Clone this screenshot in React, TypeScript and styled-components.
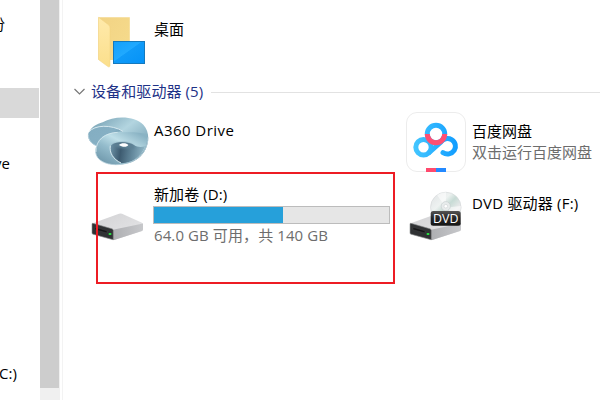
import React from "react";
import styled, { createGlobalStyle } from "styled-components";

const Global = createGlobalStyle`
  * { box-sizing: border-box; }
  body { margin: 0; background: #fff; overflow: hidden; }
`;

const Window = styled.div`
  position: relative;
  display: flex;
  width: 600px;
  height: 400px;
  overflow: hidden;
  background: #fff;
  color: #000;
  font-family: "Open Sans", "Noto Sans CJK SC", sans-serif;
  font-size: 15px;
`;

const Sidebar = styled.nav`
  width: 40px;
  height: 400px;
  overflow: hidden;
  padding-top: 9px;
  flex: none;
`;

const NavRow = styled.div<{ $selected?: boolean; $shift?: number; $gap?: number }>`
  width: 39px;
  height: 30px;
  line-height: 30px;
  margin-bottom: ${(p) => p.$gap ?? 0}px;
  text-indent: ${(p) => p.$shift ?? 0}px;
  white-space: nowrap;
  background: ${(p) => (p.$selected ? "#d9d9d9" : "transparent")};
`;

const ScrollTrack = styled.div`
  width: 20px;
  height: 400px;
  flex: none;
  background: #f0f0f0;
`;

const ScrollThumb = styled.div`
  width: 19px;
  height: 388px;
  background: #cdcdcd;
`;

const Main = styled.main`
  flex: 1;
  min-width: 0;
  margin-left: 2px;
  border-left: 1px solid #f3f3f3;
  padding-left: 11px;
`;

const FolderRow = styled.div`
  display: flex;
  height: 80px;
  padding: 14px 0 0 22px;
`;

const GroupHeader = styled.div`
  display: flex;
  align-items: center;
  height: 22px;
  color: #1e3287;
`;

const Rule = styled.div`
  flex: 1;
  height: 1px;
  margin: 2px 0 0 8px;
  background: #e2e2e2;
`;

const Grid = styled.div`
  display: grid;
  grid-template-columns: 318px 210px;
  grid-template-rows: 74px 80px;
  padding: 9px 0 0 12px;
`;

const Tile = styled.div`
  display: flex;
  min-width: 0;
`;

const IconSlot = styled.div`
  width: 68px;
  flex: none;
  svg { display: block; }
`;

const Details = styled.div<{ $top: number }>`
  margin-top: ${(p) => p.$top}px;
  line-height: 22px;
`;

const Label = styled.div<{ $muted?: boolean; $track?: number; $height?: number }>`
  height: ${(p) => p.$height ?? 22}px;
  line-height: ${(p) => p.$height ?? 22}px;
  white-space: nowrap;
  letter-spacing: ${(p) => p.$track ?? 0}px;
  color: ${(p) => (p.$muted ? "#6d6d6d" : "inherit")};
`;

const Capacity = styled.div`
  width: 237px;
  height: 18px;
  margin: 1px 0 0 -1px;
  border: 1px solid #bcbcbc;
  background: #e6e6e6;
`;

const Used = styled.div`
  width: 129px;
  height: 16px;
  background: #26a0da;
`;

const Highlight = styled.div`
  position: absolute;
  left: 96px;
  top: 172px;
  width: 299px;
  height: 112px;
  border: 2px solid #ed1c24;
  pointer-events: none;
`;

const FolderIcon = () => (
  <svg width="60" height="56" viewBox="0 0 60 56">
    <defs>
      <linearGradient id="folder" x1="0" y1="0" x2="1" y2="1">
        <stop offset="0" stopColor="#f2d384" />
        <stop offset="1" stopColor="#f6dc8d" />
      </linearGradient>
      <linearGradient id="flap" x1="0" y1="0" x2="0" y2="1">
        <stop offset="0" stopColor="#ffeaab" />
        <stop offset="1" stopColor="#fbdf8c" />
      </linearGradient>
      <linearGradient id="desk" x1="0" y1="0" x2="1" y2="1">
        <stop offset="0" stopColor="#14a0fa" />
        <stop offset="0.45" stopColor="#20a9ff" />
        <stop offset="0.47" stopColor="#109bf9" />
        <stop offset="1" stopColor="#0592f7" />
      </linearGradient>
    </defs>
    <path d="M2.5 3.3H33.8V46H2.5Z" fill="url(#folder)" />
    <path d="M2.5 3.3 12.8 11Q14 12 14 14V51.5Q13.8 54 11.5 52.3L3 46Q2.5 45.6 2.5 45Z" fill="url(#flap)" stroke="#f1d17e" strokeWidth=".5" />
    <rect x="17.5" y="27.5" width="31" height="22" fill="url(#desk)" stroke="#1579bd" />
  </svg>
);

const SwirlIcon = () => (
  <svg width="66" height="58" viewBox="6 0 198 174">
    <defs>
      <linearGradient id="back" x1="0" y1="0" x2="1" y2="1">
        <stop offset="0" stopColor="#6c98ac" />
        <stop offset=".42" stopColor="#b3d5e0" />
        <stop offset=".65" stopColor="#8fb6c6" />
        <stop offset="1" stopColor="#557c90" />
      </linearGradient>
      <linearGradient id="lobe" x1="0" y1="0" x2="1" y2=".7">
        <stop offset="0" stopColor="#83adc1" />
        <stop offset=".6" stopColor="#86b0c4" />
        <stop offset="1" stopColor="#5e889c" />
      </linearGradient>
      <linearGradient id="ring" x1="0" y1=".9" x2=".8" y2="0">
        <stop offset="0" stopColor="#6b94a8" />
        <stop offset=".4" stopColor="#94bccc" />
        <stop offset=".65" stopColor="#bfdfe8" />
        <stop offset="1" stopColor="#8ab3c4" />
      </linearGradient>
      <linearGradient id="well" x1="80" y1="110" x2="180" y2="124" gradientUnits="userSpaceOnUse">
        <stop offset="0" stopColor="#6b90a4" />
        <stop offset=".3" stopColor="#3d5b70" />
        <stop offset=".65" stopColor="#63889c" />
        <stop offset="1" stopColor="#8fb5c5" />
      </linearGradient>
      <filter id="soft"><feGaussianBlur stdDeviation="3" /></filter>
    </defs>
    <path d="M56 31C92 10 151 11 178 38C205 68 192 115 164 138C145 154 120 158 96 158C64 157 37 142 35 119C34 110 36 105 39 102C18 94 8 77 15 60C23 45 38 36 56 31Z" fill="url(#back)" />
    <path d="M15 60C31 38 83 37 117 58C76 61 50 76 39 102C18 96 9 79 15 60Z" fill="url(#lobe)" />
    <path d="M35 121C33 82 64 62 101 61C139 60 168 60 188 66C195 97 177 130 145 146C127 155 110 158 95 158C65 157 37 145 35 121Z" fill="url(#ring)" />
    <path d="M80 102C86 89 132 86 150 99C160 106 172 106 183 103C176 124 160 138 145 146C134 151 122 153 111 153C88 141 76 122 80 102Z" fill="url(#well)" />
    <path d="M84 99C104 88 140 88 153 107C137 113 107 109 84 99Z" fill="#5d8194" filter="url(#soft)" />
    <path d="M105 99C110 93 127 92 133 99C130 106 114 106 105 99Z" fill="#fff" />
    <path d="M15 60C31 38 83 37 117 58M79 101C75 122 88 142 111 153" fill="none" stroke="#d7e9ef" strokeWidth="3" />
    <path d="M36 120C34 83 65 62 101 61" fill="none" stroke="#d7e9ef" strokeWidth="2.5" />
    <path d="M13 68C12 84 26 98 39 102M35 121C37 145 65 158 95 158C150 158 191 127 192 76" fill="none" stroke="#b9d3dd" strokeWidth="2.5" />
  </svg>
);

const CloudIcon = () => (
  <svg width="60" height="60" viewBox="0 0 60 60">
    <defs>
      <linearGradient id="cloud" x1="8" y1="0" x2="52" y2="0" gradientUnits="userSpaceOnUse">
        <stop offset="0" stopColor="#43c6ff" />
        <stop offset="1" stopColor="#109cff" />
      </linearGradient>
    </defs>
    <rect x=".5" y=".5" width="59" height="59" rx="10.5" fill="#fff" stroke="#ececec" />
    <g fill="none" strokeWidth="5" stroke="url(#cloud)">
      <circle cx="30" cy="22" r="8.7" />
      <circle cx="17.5" cy="35.3" r="7.7" />
      <path strokeLinecap="round" d="M23 40.7L34.5 30.5A8 7.7 0 1 1 37 40.7" />
    </g>
    <path d="M21.3 22A8.7 8.7 0 0 0 38.7 22" fill="none" stroke="#ff4f73" strokeWidth="5" />
    <path d="M20 56H30V60H20Z" fill="#ff496d" />
    <path d="M30 56H40V60H30Z" fill="#2389ff" />
  </svg>
);

const DriveIcon = ({ disc = false }: { disc?: boolean }) => {
  const id = disc ? "dvd" : "hdd";
  return (
    <svg width="58" height="54" viewBox="0 0 58 54">
      <defs>
        <linearGradient id={`${id}Top`} x1="0" y1="0" x2="1" y2="1">
          <stop offset="0" stopColor="#d2d2d4" />
          <stop offset="1" stopColor="#e7e7e9" />
        </linearGradient>
        <linearGradient id={`${id}Side`} x1="0" y1="0" x2="1" y2="0">
          <stop offset="0" stopColor="#aeafb2" />
          <stop offset="1" stopColor="#c7c8cb" />
        </linearGradient>
        <linearGradient id="discFace" x1="0" y1="0" x2="1" y2="1">
          <stop offset="0" stopColor="#dfe2e4" />
          <stop offset=".35" stopColor="#eef2f1" />
          <stop offset=".5" stopColor="#c7dbd5" />
          <stop offset=".7" stopColor="#e8e9ea" />
          <stop offset="1" stopColor="#c9ced0" />
        </linearGradient>
        <linearGradient id="badge" x1="0" y1="0" x2="0" y2="1">
          <stop offset="0" stopColor="#555" />
          <stop offset=".5" stopColor="#242424" />
          <stop offset="1" stopColor="#151515" />
        </linearGradient>
      </defs>
      <path d="M4 33.5 31 23.8Q32.5 23.3 34 23.8L54 32.8Q55 33.3 55 34.5V39.5Q55 40.3 54 41L27 49.8Q25.7 50.2 24.5 49.7L4 44Z" fill={`url(#${id}Top)`} />
      <path d="M25 39.8 55 33.5V39.6Q55 40.5 54 41L27 49.8Q25.8 50.2 25 49.7Z" fill={`url(#${id}Side)`} />
      <path d="M5 33.3 24 38.8Q25.3 39.2 25.3 40.5V49.8L5 44.2Q4 44 4 43V34Q4 33.1 5 33.3Z" fill="#303234" stroke="#8e9092" strokeWidth=".6" />
      <path d="M7 37.3 19 40.8V43L7 39.7Z" fill="#151617" stroke="#484a4b" strokeWidth=".4" />
      <rect x="20.7" y="43" width="2.6" height="2.1" rx=".5" fill="#29dc42" />
      {disc && (
        <g>
          <circle cx="39.8" cy="17.5" r="15.3" fill="url(#discFace)" stroke="#d1d5d6" strokeWidth=".6" />
          <path d="M39.8 17.5 31 5A15 15 0 0 1 40 2.2ZM39.8 17.5 54.8 16A15 15 0 0 1 51 27Z" fill="#fff" opacity=".55" />
          <circle cx="39.8" cy="16.2" r="4.6" fill="#e8ecec" stroke="#c5cbcc" strokeWidth=".6" />
          <circle cx="39.8" cy="16.2" r="1.8" fill="#fff" stroke="#c5cbcc" strokeWidth=".5" />
          <rect x="24.7" y="21" width="30" height="14.7" rx="2.5" fill="url(#badge)" />
          <text x="39.7" y="32.5" textAnchor="middle" textLength="25.5" lengthAdjust="spacingAndGlyphs" fontFamily="Open Sans, sans-serif" fontSize="12" fill="#fff">DVD</text>
        </g>
      )}
    </svg>
  );
};

const Raised = styled.div<{ $y: number; $x?: number }>`
  margin: ${(p) => p.$y}px 0 0 ${(p) => p.$x ?? 0}px;
`;

export default function App() {
  return (
    <>
      <Global />
      <Window>
        <Sidebar>
          <NavRow $shift={-10} $gap={49}>份</NavRow>
          <NavRow $selected $gap={30} />
          <NavRow $shift={-6} $gap={180}>ve</NavRow>
          <NavRow $shift={-1}>C:)</NavRow>
        </Sidebar>
        <ScrollTrack><ScrollThumb /></ScrollTrack>
        <Main>
          <FolderRow>
            <IconSlot><FolderIcon /></IconSlot>
            <Raised $y={4} $x={-10}><Label>桌面</Label></Raised>
          </FolderRow>
          <GroupHeader>
            <svg width="17" height="12" viewBox="0 0 17 12" fill="none" stroke="#777" strokeWidth="1.2"><path d="m.5 4 5 5 5-5" /></svg>
            <Label $track={0.1}>设备和驱动器 (5)</Label>
            <Rule />
          </GroupHeader>
          <Grid>
            <Tile>
              <IconSlot><Raised $y={1}><SwirlIcon /></Raised></IconSlot>
              <Details $top={8}><Label $track={0.45}>A360 Drive</Label></Details>
            </Tile>
            <Tile>
              <IconSlot><Raised $y={1} $x={2}><CloudIcon /></Raised></IconSlot>
              <Details $top={10}><Label $height={20}>百度网盘</Label><Label $muted>双击运行百度网盘</Label></Details>
            </Tile>
            <Tile>
              <IconSlot><Raised $y={5} $x={2}><DriveIcon /></Raised></IconSlot>
              <Details $top={-2}>
                <Label $track={0.1}>新加卷 (D:)</Label>
                <Capacity><Used /></Capacity>
                <Label $muted $track={0.1}>64.0 GB 可用，共 140 GB</Label>
              </Details>
            </Tile>
            <Tile>
              <IconSlot><Raised $y={5} $x={2}><DriveIcon disc /></Raised></IconSlot>
              <Details $top={7}><Label $track={0.2}>DVD 驱动器 (F:)</Label></Details>
            </Tile>
          </Grid>
        </Main>
        <Highlight />
      </Window>
    </>
  );
}
